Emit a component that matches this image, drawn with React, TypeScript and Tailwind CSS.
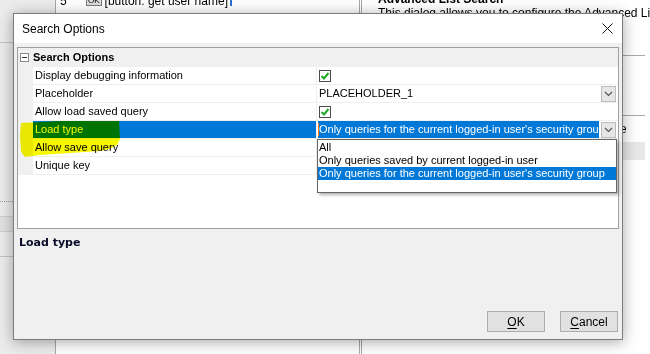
import React from "react";

function Chevron() {
  return (
    <svg width="9" height="6" viewBox="0 0 9 6">
      <polyline points="1,1 4.5,4.5 8,1" fill="none" stroke="#555" strokeWidth="1.2" />
    </svg>
  );
}

function DropBtn() {
  return (
    <div className="ml-auto mr-[2px] flex h-[16px] w-[15px] shrink-0 items-center justify-center border border-[#bcbcbc] bg-[#e6e6e6]">
      <Chevron />
    </div>
  );
}

function Check() {
  return (
    <div className="ml-[2px] flex h-[12px] w-[12px] items-center justify-center border border-[#4a4a4a] bg-white">
      <svg width="10" height="10" viewBox="0 0 10 10">
        <polyline points="1.5,5 4,7.5 8.5,2" fill="none" stroke="#20a62a" strokeWidth="2" />
      </svg>
    </div>
  );
}

function Row({
  label,
  selected,
  children,
}: {
  label: string;
  selected?: boolean;
  children?: React.ReactNode;
}) {
  return (
    <div className="flex h-[18px]">
      <div className="w-[15px] shrink-0 bg-[#f0f0f0]" />
      <div
        className={
          selected
            ? "flex w-[283px] shrink-0 items-center border-b border-[#f0f0f0] bg-[#0078d7] pl-[2px] text-white"
            : "flex w-[283px] shrink-0 items-center border-b border-[#f0f0f0] pl-[2px] text-black"
        }
      >
        {label}
      </div>
      <div className="w-px shrink-0 bg-[#f0f0f0]" />
      <div className="flex min-w-0 flex-1 items-center border-b border-[#f0f0f0]">{children}</div>
    </div>
  );
}

export default function App() {
  const longText = "Only queries for the current logged-in user's security group";
  return (
    <div className="relative h-[354px] w-[650px] overflow-hidden bg-white font-['Liberation_Sans',Arial,sans-serif] text-[11px] text-black">
      {/* background application window */}
      <div className="flex h-full">
        <div className="flex w-[56px] shrink-0 flex-col border-r border-[#a8a8a8] bg-[#ececec]">
          <div className="h-[43px] border-b border-[#c4c4c4]" />
          <div className="h-[159px] border-b border-dotted border-[#9a9a9a]" />
          <div className="mt-[14px] h-[16px] border-y border-[#d0d0d0] bg-[#e2e2e2]" />
          <div className="mt-[24px] border-t border-[#c4c4c4]" />
        </div>
        <div className="flex w-[306px] shrink-0 flex-col overflow-hidden border-r-[3px] border-double border-[#a8a8a8] bg-white">
          <div className="-mt-[6px] flex items-center whitespace-nowrap pl-[4px] text-[12px] leading-[14px]">
            <span className="w-[26px]">5</span>
            <span className="mr-[3px] border border-[#7a7a7a] bg-[#dedede] px-[1px] text-[8px] leading-[8px]">OK</span>
            <span>[button: get user name]</span>
            <span className="ml-[2px] h-[10px] w-[2px] bg-[#2b6fd6]" />
          </div>
        </div>
        <div className="flex min-w-0 flex-1 flex-col overflow-hidden bg-white">
          <div className="-mt-[8px] whitespace-nowrap pl-[16px] text-[12px] font-bold leading-[14px]">Advanced List Search</div>
          <div className="whitespace-nowrap pl-[16px] text-[12px] leading-[14px]">
            This dialog allows you to configure the Advanced List Search
          </div>
          <div className="mr-[5px] mt-[35px] border-t border-[#a8a8a8]" />
          <div className="mr-[5px] mt-[59px] border-t border-[#a8a8a8]" />
          <div className="mt-[6px] whitespace-nowrap pl-[258px] text-[12px] leading-[14px]">e</div>
          <div className="mr-[5px] mt-[6px] h-[18px] bg-[#e8e8e8]" />
        </div>
      </div>

      {/* dialog window */}
      <div className="absolute left-[13px] top-[13px] flex h-[327px] w-[610px] flex-col border border-[#7c7c7c] bg-[#f0f0f0] shadow-[0_2px_14px_rgba(0,0,0,0.35)]">
        <div className="flex h-[29px] items-center bg-white pl-[8px] pr-[9px] text-[12px]">
          <span>Search Options</span>
          <svg className="ml-auto" width="11" height="11" viewBox="0 0 11 11">
            <path d="M0.5 0.5 L10.5 10.5 M10.5 0.5 L0.5 10.5" stroke="#111" strokeWidth="1" />
          </svg>
        </div>
        <div className="flex flex-1 flex-col px-[3px] pt-[4px]">
          {/* property grid */}
          <div className="relative h-[182px] border border-[#a0a0a0] bg-white">
            <div className="flex h-[19px] items-center bg-[#f0f0f0]">
              <div className="ml-[2px] flex h-[9px] w-[9px] items-center justify-center border border-[#8a8a8a] bg-white">
                <div className="h-px w-[5px] bg-[#333]" />
              </div>
              <span className="ml-[4px] font-bold">Search Options</span>
            </div>
            <Row label="Display debugging information">
              <Check />
            </Row>
            <Row label="Placeholder">
              <span className="pl-[2px]">PLACEHOLDER_1</span>
              <DropBtn />
            </Row>
            <Row label="Allow load saved query">
              <Check />
            </Row>
            <Row label="Load type" selected>
              <div className="relative ml-[1px] flex h-[17px] w-[281px] shrink-0 items-center overflow-hidden whitespace-nowrap bg-[#0078d7] pl-[1px] text-white">
                <span className="absolute left-0 top-[2px] h-[13px] w-px bg-[#ff7a1a]" />
                {longText}
              </div>
              <DropBtn />
            </Row>
            <Row label="Allow save query" />
            <Row label="Unique key" />

            {/* open dropdown list */}
            <div className="absolute left-[299px] top-[91px] flex h-[54px] w-[300px] flex-col border border-[#646464] bg-white pt-px shadow-[2px_2px_3px_rgba(0,0,0,0.3)]">
              <div className="h-[13px] whitespace-nowrap pl-[1px] leading-[13px]">All</div>
              <div className="h-[13px] whitespace-nowrap pl-[1px] leading-[13px]">Only queries saved by current logged-in user</div>
              <div className="h-[13px] whitespace-nowrap bg-[#0078d7] pl-[1px] leading-[13px] text-white">{longText}</div>
            </div>
          </div>

          {/* description */}
          <div className="flex-1 pl-[2px] pt-[7px]">
            <div className="font-['DejaVu_Sans',Verdana,sans-serif] text-[11px] font-bold leading-[14px] text-[#0a0a28]">Load type</div>
          </div>

          {/* buttons */}
          <div className="flex justify-end gap-[15px] pb-[7px] pr-[1px] text-[12px]">
            <button className="flex h-[21px] w-[58px] items-center justify-center border border-[#adadad] bg-[#e1e1e1]">
              <span className="underline decoration-1 underline-offset-2">O</span>K
            </button>
            <button className="flex h-[21px] w-[58px] items-center justify-center border border-[#adadad] bg-[#e1e1e1]">
              <span className="underline decoration-1 underline-offset-2">C</span>ancel
            </button>
          </div>
        </div>
      </div>

      {/* yellow highlighter marks */}
      <svg className="pointer-events-none absolute left-0 top-0 mix-blend-multiply" width="650" height="354" viewBox="0 0 650 354">
        <path
          d="M21 123 L60 121 L119 121 L120 139 L117 145 L110 149 L100 151 L70 153 L40 155 L25 157 L21 152 L20 135 Z"
          fill="#f7f700"
        />
      </svg>
    </div>
  );
}
